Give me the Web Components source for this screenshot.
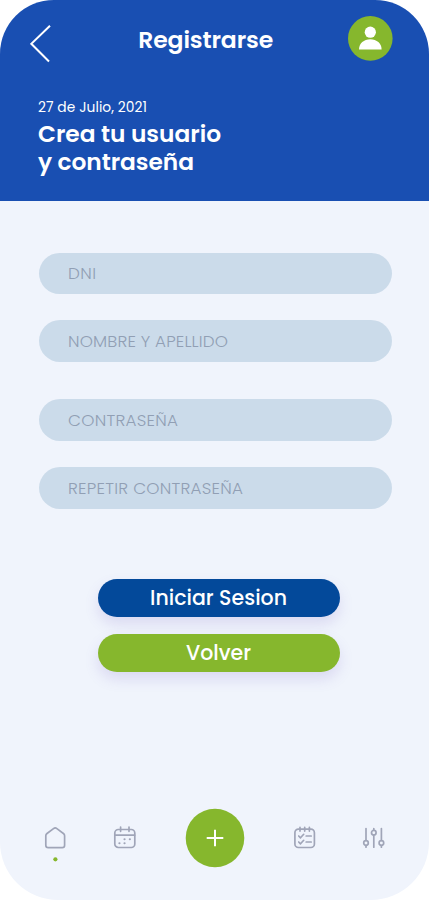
<!DOCTYPE html>
<html lang="es">
<head>
<meta charset="utf-8">
<title>Registrarse</title>
<style>
    body {
        margin: 0;
        background: #fff;
        font-family: Poppins, Inter, "Open Sans", sans-serif;
    }
</style>
</head>
<body>
<phone-screen>
    <page-header slot="header" heading="Registrarse" date="27 de Julio, 2021">
        <fit-text width="183">Crea tu usuario</fit-text>
        <fit-text width="156">y contraseña</fit-text>
    </page-header>
    <form-group>
        <form-field><fit-text width="28">DNI</fit-text></form-field>
        <form-field><fit-text width="160">NOMBRE Y APELLIDO</fit-text></form-field>
    </form-group>
    <form-group>
        <form-field><fit-text width="110">CONTRASEÑA</fit-text></form-field>
        <form-field><fit-text width="175">REPETIR CONTRASEÑA</fit-text></form-field>
    </form-group>
    <button-stack>
        <pill-button><fit-text width="137">Iniciar Sesion</fit-text></pill-button>
        <pill-button class="green"><fit-text width="65">Volver</fit-text></pill-button>
    </button-stack>
    <tab-bar slot="footer"></tab-bar>
</phone-screen>

<script>
function defineElement(name, html, Base = HTMLElement) {
    const template = document.createElement('template');
    template.innerHTML = html;

    customElements.define(name, class extends Base {
        constructor() {
            super();
            this.attachShadow({ mode: 'open' });
            this.shadowRoot.appendChild(template.content.cloneNode(true));
        }
    });
}

// Spreads a line of text to the width given in its attribute.
class FitText extends HTMLElement {
    connectedCallback() {
        const width = parseFloat(this.getAttribute('width'));
        const natural = this.getBoundingClientRect().width;
        const gaps = this.textContent.length - 1;
        if (!natural || gaps < 1) return;
        const spacing = (width - natural) / gaps;
        this.style.letterSpacing = `${spacing}px`;
        this.style.marginRight = `${-spacing}px`;
    }
}

class PageHeader extends HTMLElement {
    connectedCallback() {
        this.shadowRoot.querySelector('h1 fit-text').textContent = this.getAttribute('heading');
        this.shadowRoot.querySelector('.date fit-text').textContent = this.getAttribute('date');
    }
}

defineElement('phone-screen', `
    <style>
        :host {
            display: flex;
            flex-direction: column;
            width: 429px;
            height: 900px;
            overflow: hidden;
            border-radius: 54px 54px 58px 58px;
            background: #f0f4fc;
        }

        main {
            display: flex;
            flex: auto;
            flex-direction: column;
            gap: 37.5px;
            padding: 52px 37px 0 39px;
        }
    </style>
    <slot name="header"></slot>
    <main><slot></slot></main>
    <slot name="footer"></slot>
`);

defineElement('page-header', `
    <style>
        :host {
            display: block;
            box-sizing: border-box;
            height: 200.5px;
            padding: 14px 36.5px 0 30px;
            color: #fff;
            background: #194fb2;
        }

        .top {
            display: grid;
            grid-template-columns: 45px 1fr 45px;
            align-items: center;
            height: 46px;
        }

        .back {
            margin-top: 11px;
        }

        h1 {
            margin: 3px 11px 0 0;
            font-size: 23.5px;
            font-weight: 600;
            line-height: 28px;
            text-align: center;
        }

        .date {
            margin: 39px 0 0 8px;
            font-size: 13.8px;
            line-height: 18px;
        }

        h2 {
            display: flex;
            flex-direction: column;
            align-items: flex-start;
            margin: 3px 0 0 8px;
            font-size: 23.3px;
            font-weight: 600;
            line-height: 28px;
        }
    </style>
    <div class="top">
        <svg class="back" width="22" height="38" fill="none" stroke="#fff" stroke-width="2">
            <path d="M20 .8 1.3 18.8 19 36.5"/>
        </svg>
        <h1><fit-text width="135"></fit-text></h1>
        <svg width="45" height="45" fill="#fff">
            <circle cx="22.3" cy="22.4" r="22.3" fill="#86b72d"/>
            <circle cx="22.3" cy="16.2" r="5.6"/>
            <path d="M11 33.4c0-6 4.9-10.2 11.3-10.2s11.3 4.2 11.3 10.2z"/>
        </svg>
    </div>
    <div class="date"><fit-text width="109"></fit-text></div>
    <h2><slot></slot></h2>
`, PageHeader);

defineElement('form-group', `
    <style>
        :host {
            display: flex;
            flex-direction: column;
            gap: 26.3px;
        }
    </style>
    <slot></slot>
`);

defineElement('form-field', `
    <style>
        :host {
            display: flex;
            align-items: center;
            box-sizing: border-box;
            height: 41.5px;
            padding: 0 0 0 29px;
            border-radius: 21px;
            color: #919fb4;
            background: #cbdbea;
            font-size: 16.8px;
            font-weight: 300;
        }
    </style>
    <slot></slot>
`);

defineElement('button-stack', `
    <style>
        :host {
            display: flex;
            flex-direction: column;
            gap: 17px;
            margin: 33px 52.5px 0 58.5px;
        }
    </style>
    <slot></slot>
`);

defineElement('pill-button', `
    <style>
        :host {
            display: flex;
            align-items: center;
            justify-content: center;
            box-sizing: border-box;
            height: 38px;
            padding-bottom: 2px;
            border-radius: 19px;
            color: #fff;
            background: #03499a;
            box-shadow: 0 7px 14px rgba(110, 90, 190, .17);
            font-size: 20.5px;
            font-weight: 500;
        }

        :host(.green) {
            background: #86b72d;
        }
    </style>
    <slot></slot>
`);

defineElement('tab-bar', `
    <style>
        :host {
            display: grid;
            grid-template-columns: 24px 24px 60px 24px 24px;
            column-gap: 46px;
            align-items: center;
            height: 60px;
            padding: 0 43px 32px 43px;
            color: #a0a5b8;
        }

        svg {
            display: block;
            overflow: visible;
            fill: none;
            stroke: currentColor;
            stroke-width: 1.7;
            stroke-linecap: round;
            stroke-linejoin: round;
        }
    </style>
    <svg width="24" height="24">
        <path d="M2.8 9.8c0-1 .4-1.7 1.2-2.3l6.5-4.9c1.1-.8 2.3-.8 3.4 0l6.5 4.9c.8.6 1.2 1.3 1.2 2.3v9.5c0 1.5-.9 2.4-2.4 2.4h-14c-1.5 0-2.4-.9-2.4-2.4z"/>
        <circle cx="12.4" cy="33.3" r="2.1" fill="#86b72d" stroke="none"/>
    </svg>
    <svg width="24" height="24">
        <rect x="1.8" y="3.5" width="20" height="18" rx="3.5"/>
        <path d="M2 9.2h19.6M7.6 1v4.3M16 1v4.3"/>
        <path d="M11.5 13.2h.1M16.8 13.2h.1M6.4 17.3h.1M11.5 17.3h.1" stroke-width="2.1"/>
    </svg>
    <svg width="60" height="60">
        <circle cx="32" cy="30" r="29.3" fill="#86b72d" stroke="none"/>
        <path d="M23.7 30h16.6M32 21.7v16.6" stroke="#fff" stroke-width="2" stroke-linecap="butt"/>
    </svg>
    <svg width="24" height="24">
        <g transform="translate(2.5 0)">
            <rect x="3.4" y="3.2" width="19.5" height="18.3" rx="3.5"/>
            <path d="M8.5 1.3v3.8M13.2 1.3v3.8M17.9 1.3v3.8M7.2 10l1.8 1.8 3.2-3.5M14.7 10h5M7.2 16l1.8 1.8 3.2-3.5M14.7 16h5"/>
        </g>
    </svg>
    <svg width="24" height="24">
        <g transform="translate(2 0)">
            <path d="M5 2.5v12M5 19.5v1.7M12.8 2.5v1.7M12.8 9.2v12M20.4 2.5v12M20.4 19.5v1.7"/>
            <circle cx="5" cy="17" r="2.3"/>
            <circle cx="12.8" cy="6.7" r="2.3"/>
            <circle cx="20.4" cy="17" r="2.3"/>
        </g>
    </svg>
`);

defineElement('fit-text', `
    <style>
        :host {
            display: inline-block;
            white-space: nowrap;
        }
    </style>
    <slot></slot>
`, FitText);

// The header fills its labels on upgrade, so measure those once more.
document.querySelector('page-header').shadowRoot.querySelectorAll('fit-text').forEach((label) => {
    label.style.letterSpacing = '';
    label.style.marginRight = '';
    label.connectedCallback();
});
</script>
</body>
</html>
